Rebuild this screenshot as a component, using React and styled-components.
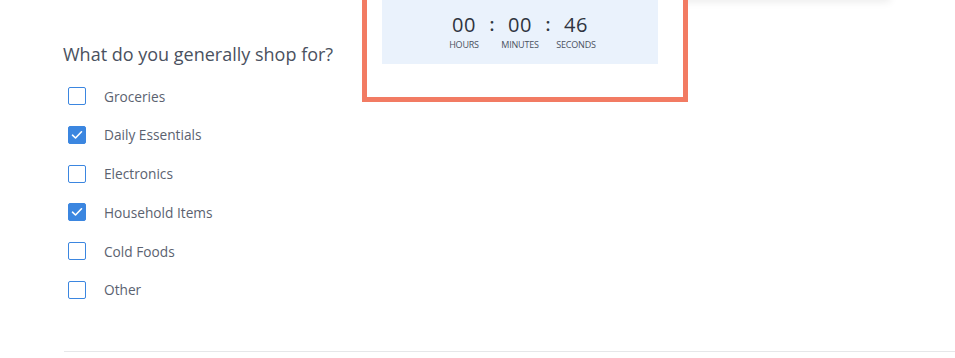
import React from 'react'
import styled, { createGlobalStyle } from 'styled-components'

const GlobalStyle = createGlobalStyle`
  html, body { margin: 0; padding: 0; background: #fff; }
  body { font-family: 'Open Sans', 'Noto Sans', sans-serif; }
`

const Page = styled.div`
  position: relative;
  width: 955px;
  height: 358px;
  overflow: hidden;
  background: #fff;
`

const TopCard = styled.div`
  position: absolute;
  top: -40px;
  left: 600px;
  width: 290px;
  height: 40px;
  background: #fff;
  box-shadow: 0 2px 8px rgba(0, 0, 0, 0.08);
`

const Highlight = styled.div`
  position: absolute;
  top: 0;
  left: 362px;
  width: 316px;
  height: 97px;
  border: 5px solid #f27b63;
  border-top: none;
  background: #fff;
`

const Timer = styled.div`
  margin-left: 15px;
  width: 276px;
  height: 64px;
  background: #eaf2fc;
  display: flex;
  justify-content: center;
  align-items: flex-start;
  padding-top: 13px;
  box-sizing: border-box;
`

const Unit = styled.div`
  width: 44px;
  display: flex;
  flex-direction: column;
  align-items: center;
`

const Digits = styled.div`
  font-size: 20px;
  line-height: 24px;
  color: #2f3440;
  letter-spacing: 0.5px;
`

const UnitLabel = styled.div`
  font-size: 9px;
  line-height: 12px;
  color: #4a5160;
  margin-top: 2px;
  letter-spacing: -0.2px;
`

const Colon = styled.div`
  width: 12px;
  text-align: center;
  font-size: 18px;
  line-height: 22px;
  font-weight: 600;
  color: #2f3440;
`

const Form = styled.div`
  padding: 42px 0 0 63px;
`

const Question = styled.h2`
  margin: 0 0 21px;
  font-size: 18px;
  line-height: 24px;
  font-weight: 400;
  color: #4a5160;
`

const Options = styled.ul`
  list-style: none;
  margin: 0;
  padding: 0 0 0 5px;
  display: flex;
  flex-direction: column;
  gap: 20.8px;
`

const Option = styled.li`
  display: flex;
  align-items: center;
  height: 18px;
`

const Box = styled.span`
  width: 18px;
  height: 18px;
  box-sizing: border-box;
  border-radius: 2px;
  border: 1.5px solid #3b86e0;
  background: ${({ checked }) => (checked ? '#3b86e0' : '#fff')};
  display: flex;
  align-items: center;
  justify-content: center;
  flex-shrink: 0;
`

const OptionLabel = styled.span`
  margin-left: 18px;
  font-size: 13.7px;
  color: #5b6270;
`

const Divider = styled.div`
  position: absolute;
  left: 64px;
  right: 0;
  top: 351px;
  height: 1px;
  background: #e6e7e9;
`

const options = [
  { label: 'Groceries', checked: false },
  { label: 'Daily Essentials', checked: true },
  { label: 'Electronics', checked: false },
  { label: 'Household Items', checked: true },
  { label: 'Cold Foods', checked: false },
  { label: 'Other', checked: false },
]

const Check = () => (
  <svg width="12" height="10" viewBox="0 0 12 10">
    <path d="M1.5 5.2 L4.5 8 L10.5 1.8" fill="none" stroke="#fff" strokeWidth="1.6" strokeLinecap="round" strokeLinejoin="round" />
  </svg>
)

export default function App() {
  return (
    <Page>
      <GlobalStyle />
      <TopCard />
      <Form>
        <Question>What do you generally shop for?</Question>
        <Options>
          {options.map((o) => (
            <Option key={o.label}>
              <Box checked={o.checked}>{o.checked && <Check />}</Box>
              <OptionLabel>{o.label}</OptionLabel>
            </Option>
          ))}
        </Options>
      </Form>
      <Highlight>
        <Timer>
          <Unit>
            <Digits>00</Digits>
            <UnitLabel>HOURS</UnitLabel>
          </Unit>
          <Colon>:</Colon>
          <Unit>
            <Digits>00</Digits>
            <UnitLabel>MINUTES</UnitLabel>
          </Unit>
          <Colon>:</Colon>
          <Unit>
            <Digits>46</Digits>
            <UnitLabel>SECONDS</UnitLabel>
          </Unit>
        </Timer>
      </Highlight>
      <Divider />
    </Page>
  )
}
